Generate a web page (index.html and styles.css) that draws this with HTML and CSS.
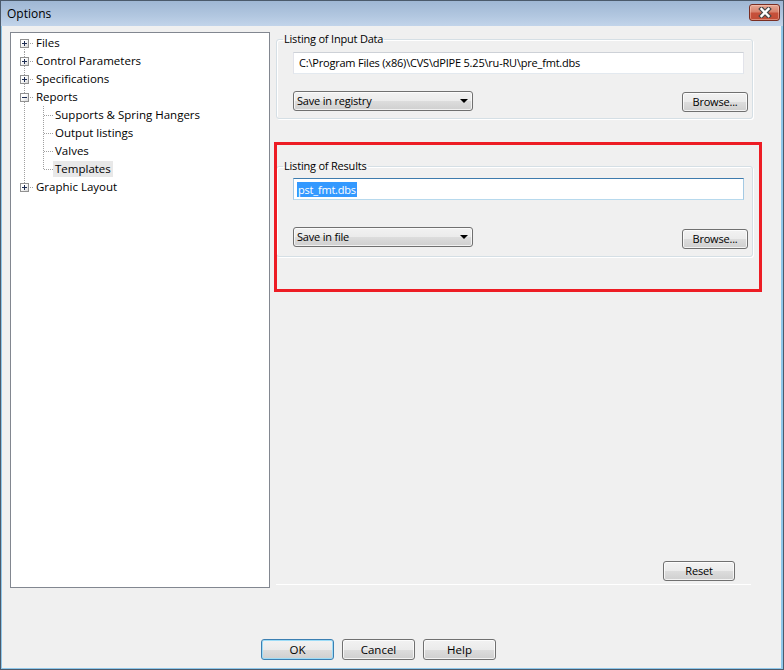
FILE: index.html
```html
<!DOCTYPE html>
<html lang="en">
<head>
<meta charset="utf-8">
<title>Options</title>
<link rel="stylesheet" href="styles.css">
</head>
<body>
<div class="window">
  <div class="titlebar">
    <span class="title">Options</span>
    <div class="close" aria-label="Close">
      <svg width="14" height="11" viewBox="0 0 14 11">
        <path d="M3.5 2 L10.5 9 M10.5 2 L3.5 9" stroke="#474747" stroke-width="4.6" stroke-linecap="square" fill="none"/>
        <path d="M3.5 2 L10.5 9 M10.5 2 L3.5 9" stroke="#ffffff" stroke-width="2.4" stroke-linecap="square" fill="none"/>
      </svg>
    </div>
  </div>
  <div class="client">
    <div class="main">
      <div class="tree">
        <div class="node first"><span class="exp"><svg width="7" height="7" viewBox="0 0 7 7"><path d="M1 3.5h5M3.5 1v5" stroke="#1e2d52"/></svg></span><span class="hdots"></span><span class="label">Files</span></div>
        <div class="node"><span class="exp"><svg width="7" height="7" viewBox="0 0 7 7"><path d="M1 3.5h5M3.5 1v5" stroke="#1e2d52"/></svg></span><span class="hdots"></span><span class="label">Control Parameters</span></div>
        <div class="node"><span class="exp"><svg width="7" height="7" viewBox="0 0 7 7"><path d="M1 3.5h5M3.5 1v5" stroke="#1e2d52"/></svg></span><span class="hdots"></span><span class="label">Specifications</span></div>
        <div class="node"><span class="exp"><svg width="7" height="7" viewBox="0 0 7 7"><path d="M1 3.5h5" stroke="#1e2d52"/></svg></span><span class="hdots"></span><span class="label">Reports</span></div>
        <div class="leaf"><span class="hdots long"></span><span class="label">Supports &amp; Spring Hangers</span></div>
        <div class="leaf"><span class="hdots long"></span><span class="label">Output listings</span></div>
        <div class="leaf"><span class="hdots long"></span><span class="label">Valves</span></div>
        <div class="leaf last"><span class="hdots long"></span><span class="label selected">Templates</span></div>
        <div class="node last"><span class="exp"><svg width="7" height="7" viewBox="0 0 7 7"><path d="M1 3.5h5M3.5 1v5" stroke="#1e2d52"/></svg></span><span class="hdots"></span><span class="label">Graphic Layout</span></div>
      </div>

      <div class="panel">
        <fieldset class="group">
          <legend>Listing of Input Data</legend>
          <div class="group-body">
            <div class="field">C:\Program Files (x86)\CVS\dPIPE 5.25\ru-RU\pre_fmt.dbs</div>
            <div class="row">
              <div class="combo"><span>Save in registry</span><span class="arrow"></span></div>
              <div class="btn browse">Browse...</div>
            </div>
          </div>
        </fieldset>

        <fieldset class="group results">
          <legend>Listing of Results</legend>
          <div class="group-body">
            <div class="field focused"><span class="sel">pst_fmt.dbs</span></div>
            <div class="row">
              <div class="combo"><span>Save in file</span><span class="arrow"></span></div>
              <div class="btn browse">Browse...</div>
            </div>
          </div>
        </fieldset>

        <div class="spacer"></div>
        <div class="reset-row"><div class="btn reset">Reset</div></div>
        <div class="sep"></div>

        <div class="annotation"></div>
      </div>
    </div>

    <div class="footer">
      <div class="btn dlg default">OK</div>
      <div class="btn dlg">Cancel</div>
      <div class="btn dlg">Help</div>
    </div>
  </div>
</div>
</body>
</html>
```

FILE: styles.css
```css
* { box-sizing: border-box; }

html, body {
  margin: 0;
  padding: 0;
  background: #f0f0f0;
}

body {
  font-family: "Open Sans", "Noto Sans", sans-serif;
  font-size: 11.5px;
  line-height: 16px;
  color: #000;
}

.window {
  width: 784px;
  height: 670px;
  border: 1px solid #4b5a6b;
  display: flex;
  flex-direction: column;
  background: #f0f0f0;
}

/* ---------- title bar ---------- */
.titlebar {
  height: 25px;
  flex: none;
  display: flex;
  justify-content: space-between;
  align-items: flex-start;
  background: linear-gradient(to bottom, #9fb7d4 0%, #b2c7e0 60%, #c2d4ea 100%);
}

.title {
  padding-left: 6px;
  line-height: 25px;
  font-size: 12px;
}

.close {
  width: 31px;
  height: 17px;
  margin: 3px 3px 0 0;
  border: 1px solid #7a2e22;
  border-radius: 3px;
  background: linear-gradient(to bottom, #e6a996 0%, #d8826d 45%, #c6503a 55%, #c24d36 100%);
  box-shadow: inset 0 0 0 1px rgba(255, 210, 195, 0.45);
  display: flex;
  align-items: center;
  justify-content: center;
}

/* ---------- client ---------- */
.client {
  flex: 1;
  display: flex;
  flex-direction: column;
  border-left: 1px solid #8fc7ea;
  border-right: 2px solid #8fc7ea;
  border-bottom: 1px solid #8fc7ea;
}

.main {
  display: flex;
  align-items: stretch;
  padding: 6px 0 0 8px;
  height: 562px;
}

/* ---------- tree ---------- */
.tree {
  width: 260px;
  height: 556px;
  flex: none;
  border: 1px solid #828790;
  background: #fff;
  padding-top: 1px;
}

.node, .leaf {
  position: relative;
  height: 18px;
  display: flex;
  align-items: center;
}

.node { padding-left: 9px; }
.leaf { padding-left: 33px; }

.node::before,
.leaf::before {
  content: "";
  position: absolute;
  left: 13px;
  top: 0;
  bottom: 0;
  width: 1px;
  background: repeating-linear-gradient(to bottom, #a0a0a0 0 1px, transparent 1px 2px);
}

.node.first::before { top: 9px; }
.node.last::before { bottom: 9px; }

.leaf::after {
  content: "";
  position: absolute;
  left: 32px;
  top: 0;
  bottom: 0;
  width: 1px;
  background: repeating-linear-gradient(to bottom, #a0a0a0 0 1px, transparent 1px 2px);
}

.leaf.last::after { bottom: 9px; }

.exp {
  position: relative;
  z-index: 1;
  flex: none;
  width: 9px;
  height: 9px;
  border: 1px solid #919191;
  background: linear-gradient(135deg, #ffffff 35%, #d9d9d9 100%);
  display: flex;
}

.exp svg { display: block; }

.hdots {
  flex: none;
  width: 5px;
  height: 1px;
  background: repeating-linear-gradient(to right, transparent 0 1px, #a0a0a0 1px 2px);
}

.hdots.long { width: 9px; background: repeating-linear-gradient(to right, #a0a0a0 0 1px, transparent 1px 2px); }

.label {
  padding: 0 2px;
  white-space: nowrap;
  line-height: 16px;
}

.label.selected { background: #e8e8e8; }

/* ---------- right panel ---------- */
.panel {
  position: relative;
  width: 477px;
  margin-left: 6px;
  display: flex;
  flex-direction: column;
  padding-bottom: 3px;
  font-size: 11px;
  letter-spacing: -0.2px;
}

.group {
  margin: 0;
  padding: 0;
  min-width: 0;
  border: 1px solid #d5dfe5;
  border-radius: 3px;
  box-shadow: inset 1px 1px 0 #ffffff, 1px 1px 0 #ffffff;
}

.group.results { margin-top: 40px; }

.group legend {
  margin-left: 6px;
  padding: 0 1px;
  line-height: 14px;
}

.group-body {
  padding: 0 8px 6px 16px;
}

.field {
  margin-top: 6px;
  height: 22px;
  border: 1px solid;
  border-color: #cdd1d7 #e2e3ea #e3e9ef #e2e3ea;
  background: #fff;
  padding: 0 5px;
  line-height: 20px;
  white-space: nowrap;
  overflow: hidden;
}

.field.focused {
  border-color: #3d7bad #a4c9e3 #b7d9ed #a4c9e3;
  padding-left: 3px;
}

.sel {
  display: inline-block;
  background: #3399ff;
  color: #fff;
  line-height: 15px;
  padding: 0 1px;
  vertical-align: middle;
  margin-top: -2px;
}

.row {
  margin-top: 17px;
  margin-right: -4px;
  display: flex;
  justify-content: space-between;
  align-items: flex-start;
}

.results .group-body { padding-bottom: 7px; }
.results .field { margin-top: 5px; }
.results .row { margin-top: 27px; }
.results .browse { margin-top: 2px; }

.combo {
  width: 180px;
  height: 20px;
  border: 1px solid #707070;
  border-radius: 3px;
  background: linear-gradient(to bottom, #f2f2f2 0%, #ebebeb 50%, #dddddd 50%, #cfcfcf 100%);
  box-shadow: inset 0 0 0 1px rgba(255, 255, 255, 0.7);
  display: flex;
  align-items: center;
  justify-content: space-between;
  padding: 0 4px 0 3px;
  line-height: 18px;
}

.arrow {
  width: 0;
  height: 0;
  border-left: 4px solid transparent;
  border-right: 4px solid transparent;
  border-top: 4px solid #000;
}

.btn {
  height: 20px;
  border: 1px solid #707070;
  border-radius: 3px;
  background: linear-gradient(to bottom, #f2f2f2 0%, #ebebeb 50%, #dddddd 50%, #cfcfcf 100%);
  box-shadow: inset 0 0 0 1px rgba(255, 255, 255, 0.75);
  display: flex;
  align-items: center;
  justify-content: center;
  line-height: 18px;
}

.browse {
  width: 66px;
  margin-top: 1px;
}

.spacer { flex: 1; }

.reset-row {
  display: flex;
  justify-content: flex-end;
  padding-right: 18px;
}

.reset { width: 72px; }

.sep {
  height: 1px;
  margin: 3px 2px 0 0;
  background: #ffffff;
}

.annotation {
  position: absolute;
  left: -2px;
  top: 110px;
  width: 488px;
  height: 150px;
  border: 3px solid #ed1c24;
  pointer-events: none;
}

/* ---------- footer ---------- */
.footer {
  display: flex;
  gap: 8px;
  padding: 51px 0 0 259px;
}

.dlg {
  width: 73px;
  height: 21px;
}

.dlg.default {
  border-color: #3c7fb1;
  box-shadow: inset 0 0 0 1px #9ddcf7;
}
```
